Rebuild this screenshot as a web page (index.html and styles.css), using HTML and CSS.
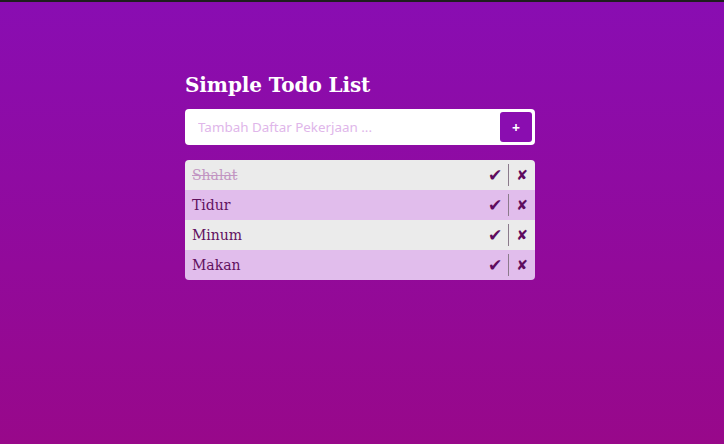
FILE: index.html
```html
<!DOCTYPE html>
<html>
<head>
<meta charset="utf-8">
<link rel="stylesheet" href="styles.css">
</head>
<body>
<div class="topline"></div>
<main class="app">
  <h1 class="title">Simple Todo List</h1>
  <form class="add">
    <input class="add-input" type="text" placeholder="Tambah Daftar Pekerjaan ...">
    <button class="add-btn" type="button">+</button>
  </form>
  <ul class="list">
    <li class="item done"><span class="label">Shalat</span><span class="actions"><span class="check">✔</span><span class="sep"></span><span class="del">✘</span></span></li>
    <li class="item alt"><span class="label">Tidur</span><span class="actions"><span class="check">✔</span><span class="sep"></span><span class="del">✘</span></span></li>
    <li class="item"><span class="label">Minum</span><span class="actions"><span class="check">✔</span><span class="sep"></span><span class="del">✘</span></span></li>
    <li class="item alt"><span class="label">Makan</span><span class="actions"><span class="check">✔</span><span class="sep"></span><span class="del">✘</span></span></li>
  </ul>
</main>
</body>
</html>
```
FILE: styles.css
```css
html, body {
  margin: 0;
  height: 100%;
}
body {
  background: linear-gradient(to bottom, #890db2 0%, #920a9a 60%, #98088a 100%);
  font-family: "DejaVu Serif", serif;
  overflow: hidden;
}
.topline {
  height: 2px;
  background: #1e1e1e;
}
.app {
  width: 350px;
  margin: 0 auto;
  padding-top: 68px;
  position: relative;
  left: -2px;
}
.title {
  margin: 0;
  color: #ffffff;
  font-size: 20px;
  font-weight: bold;
  line-height: 30px;
  letter-spacing: -0.1px;
}
.add {
  margin: 9px 0 0;
  height: 36px;
  background: #ffffff;
  border-radius: 4px;
  display: flex;
  align-items: center;
  padding: 0 3px 0 13px;
  box-sizing: border-box;
}
.add-input {
  flex: 1;
  border: none;
  outline: none;
  background: transparent;
  font-family: "Noto Sans", sans-serif;
  font-size: 13.4px;
  color: #7a1a8a;
  padding: 0;
}
.add-input::placeholder {
  color: #e0b6ea;
}
.add-btn {
  width: 32px;
  height: 30px;
  border: none;
  border-radius: 3px;
  background: #8a0db0;
  color: #ffffff;
  font-family: "Noto Sans", sans-serif;
  font-weight: bold;
  font-size: 14px;
  padding: 0;
}
.list {
  list-style: none;
  margin: 15px 0 0;
  padding: 0;
  border-radius: 4px;
  overflow: hidden;
}
.item {
  height: 30px;
  display: flex;
  align-items: center;
  padding: 0 7px 0 7px;
  background: #ebebeb;
  color: #62115f;
  font-size: 14px;
}
.item.alt {
  background: #e1bdec;
}
.label {
  flex: 1;
}
.done .label {
  text-decoration: line-through;
  color: #c295c2;
}
.actions {
  display: flex;
  align-items: center;
  color: #5f0c5e;
}
.check {
  font-size: 17px;
  font-family: "DejaVu Sans", sans-serif;
  font-weight: bold;
}
.sep {
  width: 1px;
  height: 22px;
  background: #8b7a8b;
  margin: 0 7px 0 6px;
}
.del {
  font-size: 14px;
  font-family: "DejaVu Sans", sans-serif;
  font-weight: bold;
}
```
